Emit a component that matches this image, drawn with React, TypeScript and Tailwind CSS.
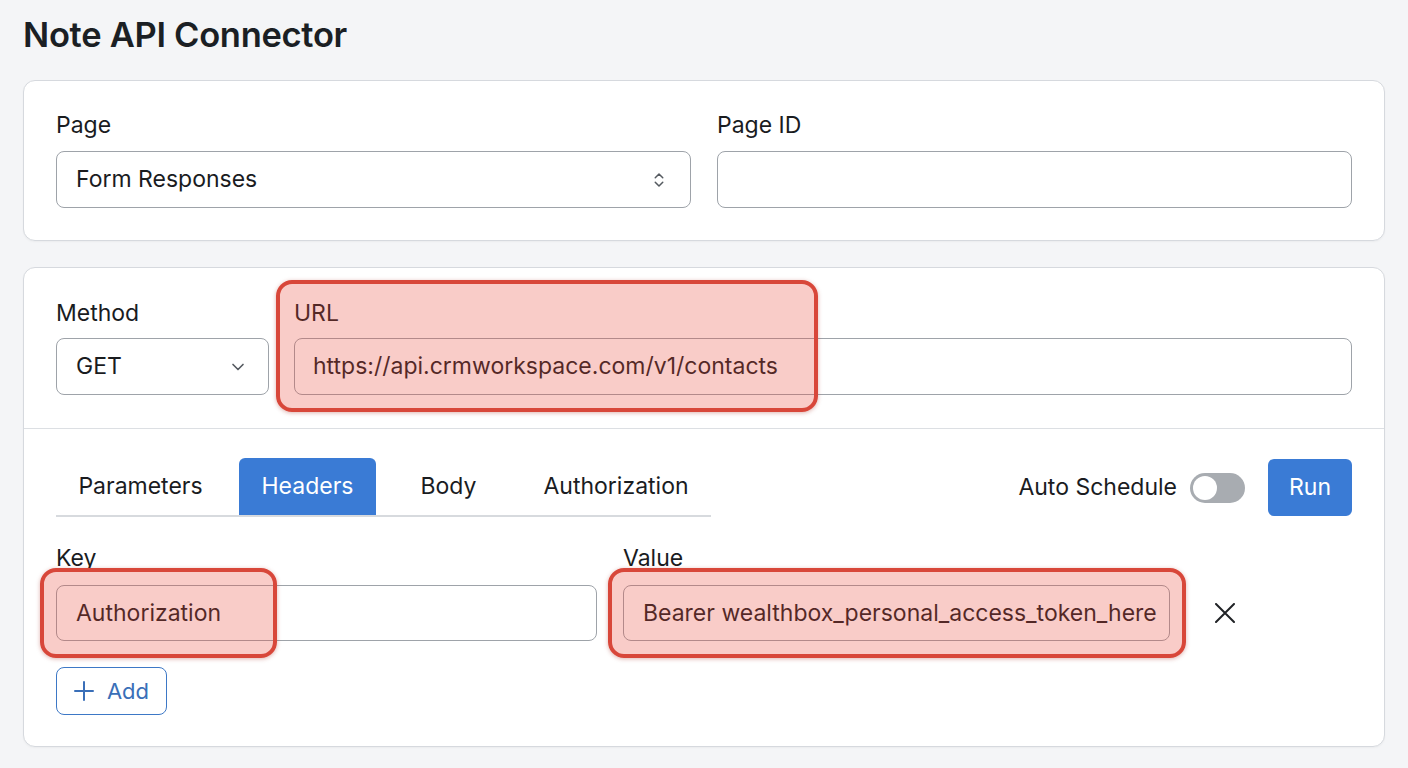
import { ChevronDown, ChevronsUpDown } from "lucide-react";

function Highlight({ className }: { className: string }) {
  return (
    <div
      className={`pointer-events-none absolute rounded-[16px] border-[4px] border-[#d8473a] bg-[rgba(232,72,58,0.28)] shadow-[0_1px_4px_rgba(160,40,30,0.35)] ${className}`}
    />
  );
}

export default function App() {
  return (
    <div className="min-h-screen w-full bg-[#f4f5f7] px-[23px] pt-[15px] pb-[20px] text-[#1a1c1f] font-['Inter','Noto_Sans',sans-serif]">
      <h1 className="text-[34.5px] leading-[40px] font-semibold tracking-[-0.3px] text-[#1b1f24]">
        Note API Connector
      </h1>

      {/* Card 1 */}
      <div className="mt-[25px] rounded-[12px] border border-[#d6d9de] bg-white px-[32px] pt-[30px] pb-[32px] shadow-[0_1px_2px_rgba(0,0,0,0.04)]">
        <div className="grid grid-cols-2 gap-[26px]">
          <div>
            <div className="text-[23px] leading-[28px] mb-[12px]">Page</div>
            <div className="flex h-[57px] items-center justify-between rounded-[8px] border border-[#9ea3a9] bg-white pl-[19px] pr-[22px] text-[23px]">
              <span>Form Responses</span>
              <ChevronsUpDown size={18} strokeWidth={2} className="text-[#555a60]" />
            </div>
          </div>
          <div>
            <div className="text-[23px] leading-[28px] mb-[12px]">Page ID</div>
            <div className="h-[57px] rounded-[8px] border border-[#9ea3a9] bg-white" />
          </div>
        </div>
      </div>

      {/* Card 2 */}
      <div className="mt-[26px] rounded-[12px] border border-[#d6d9de] bg-white shadow-[0_1px_2px_rgba(0,0,0,0.04)]">
        <div className="flex gap-[25px] px-[32px] pt-[31px] pb-[33px]">
          <div className="w-[213px]">
            <div className="text-[23px] leading-[28px] mb-[11px]">Method</div>
            <div className="flex h-[57px] items-center justify-between rounded-[8px] border border-[#9ea3a9] bg-white pl-[19px] pr-[20px] text-[23px]">
              <span>GET</span>
              <ChevronDown size={20} strokeWidth={2} className="text-[#555a60]" />
            </div>
          </div>
          <div className="relative flex-1">
            <div className="text-[23px] leading-[28px] mb-[11px]">URL</div>
            <div className="flex h-[57px] items-center rounded-[8px] border border-[#9ea3a9] bg-white pl-[18px] text-[23px]">
              https://api.crmworkspace.com/v1/contacts
            </div>
            <Highlight className="left-[-18px] top-[-19px] w-[542px] h-[132px]" />
          </div>
        </div>

        <div className="border-t border-[#dcdfe3] px-[32px] pt-[29px] pb-[31px]">
          <div className="flex items-center justify-between">
            <div className="flex gap-[14px] border-b-2 border-[#d7dade] text-[23px]">
              <div className="flex h-[57px] w-[169px] items-center justify-center">Parameters</div>
              <div className="flex h-[57px] w-[137px] items-center justify-center rounded-t-[6px] bg-[#3a7bd5] text-white">Headers</div>
              <div className="flex h-[57px] w-[117px] items-center justify-center">Body</div>
              <div className="flex h-[57px] w-[190px] items-center justify-center">Authorization</div>
            </div>
            <div className="flex items-center">
              <span className="text-[23px]">Auto Schedule</span>
              <div className="ml-[13px] flex h-[30px] w-[55px] items-center rounded-full bg-[#a8acb1] px-[3px]">
                <div className="h-[24px] w-[24px] rounded-full bg-white" />
              </div>
              <button className="ml-[23px] h-[57px] w-[84px] rounded-[6px] bg-[#3a7bd5] text-[23px] text-white">
                Run
              </button>
            </div>
          </div>

          <div className="mt-[27px] flex items-end">
            <div className="relative w-[541px]">
              <div className="text-[23px] leading-[28px] mb-[13px]">Key</div>
              <div className="flex h-[56px] items-center rounded-[8px] border border-[#9ea3a9] bg-white pl-[19px] text-[23px]">
                Authorization
              </div>
              <Highlight className="left-[-16px] top-[24px] w-[237px] h-[90px]" />
            </div>
            <div className="relative ml-[26px] w-[547px]">
              <div className="text-[23px] leading-[28px] mb-[13px]">Value</div>
              <div className="flex h-[56px] items-center overflow-hidden whitespace-nowrap rounded-[8px] border border-[#9ea3a9] bg-white pl-[19px] text-[23px]">
                Bearer wealthbox_personal_access_token_here
              </div>
              <Highlight className="left-[-15px] top-[24px] w-[578px] h-[90px]" />
            </div>
            <div className="ml-[45px] flex h-[56px] items-center">
              <svg width="20" height="20" viewBox="0 0 20 20" fill="none" stroke="#202226" strokeWidth="2" strokeLinecap="round">
                <path d="M1 1 L19 19 M19 1 L1 19" />
              </svg>
            </div>
          </div>

          <button className="mt-[26px] flex h-[48px] w-[111px] items-center justify-center gap-[13px] rounded-[8px] border-[1.5px] border-[#3d78c6] bg-white text-[22px] text-[#3a6fb8]">
            <svg width="20" height="20" viewBox="0 0 20 20" fill="none" stroke="#3a6fb8" strokeWidth="2" strokeLinecap="round">
              <path d="M10 1 V19 M1 10 H19" />
            </svg>
            <span>Add</span>
          </button>
        </div>
      </div>
    </div>
  );
}
